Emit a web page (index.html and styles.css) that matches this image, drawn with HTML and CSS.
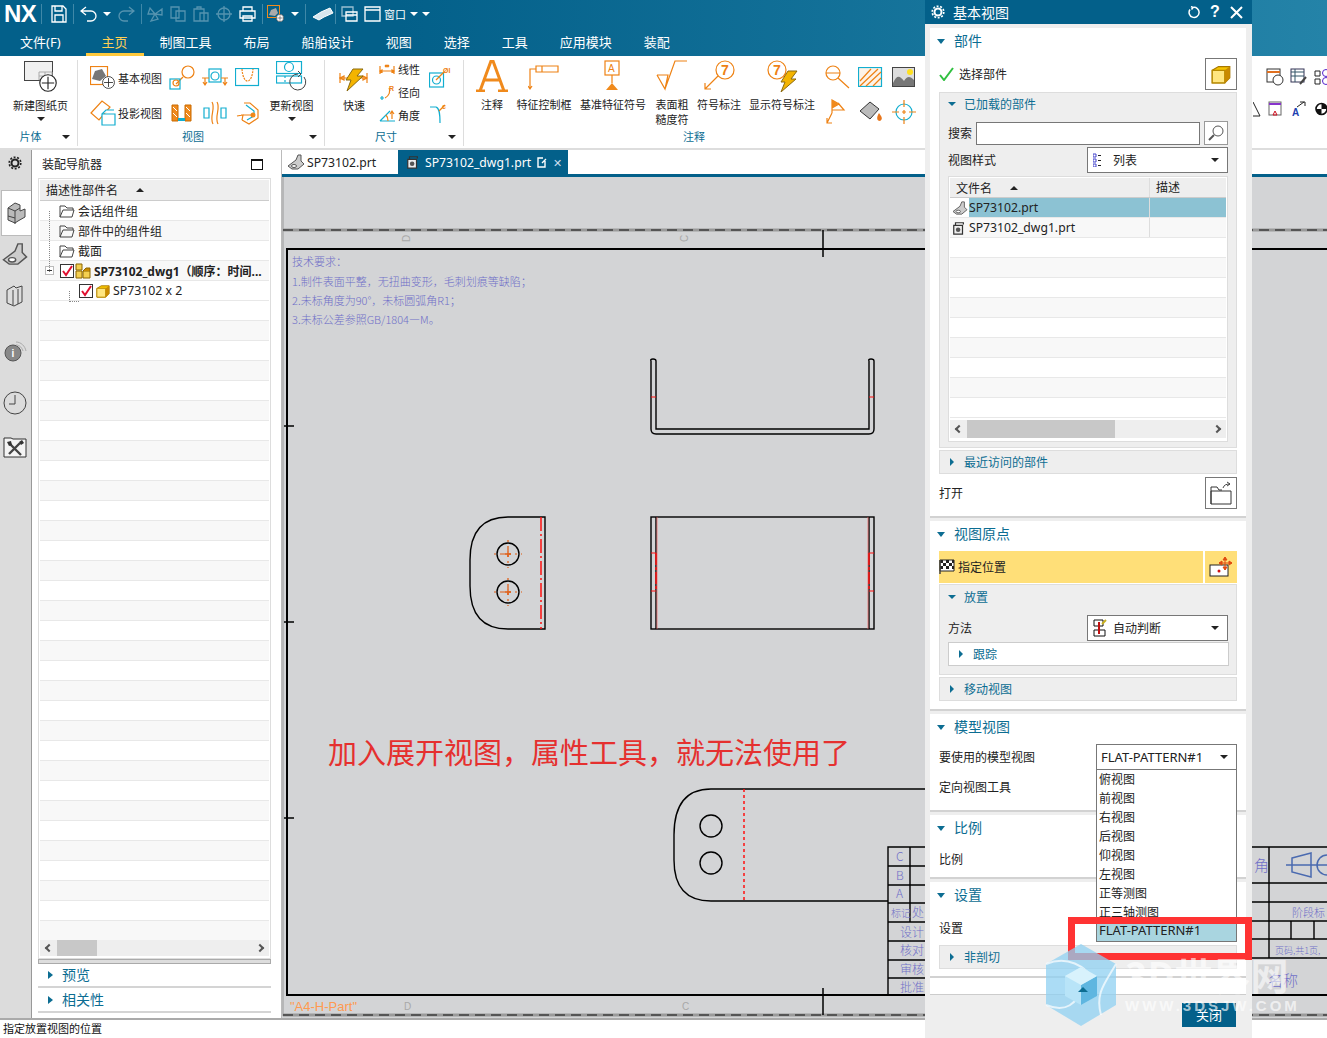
FILE: index.html
```html
<!DOCTYPE html>
<html lang="zh">
<head>
<meta charset="utf-8">
<title>NX 基本视图</title>
<link rel="stylesheet" href="styles.css">
</head>
<body>
<svg class="defs" aria-hidden="true">
  <symbol id="cube" viewBox="0 0 16 16"><path d="M1 5 6 2h9v9l-4 4H1z" fill="#f6c400" stroke="#a87800"/><path d="M1 5h10v10H1z" fill="#ffe680" stroke="#b88a00"/><path d="M11 5l4-3v9l-4 4z" fill="#c98a00"/></symbol>
  <symbol id="cubes" viewBox="0 0 16 16"><path d="M1 1h6v6H1zM1 8h6v7H1zM8 8h7v7H8z" fill="#f4cf50" stroke="#8a6400"/><path d="M8 8l3-3h4v3" fill="#c98a00" stroke="#8a6400"/></symbol>
  <symbol id="chk" viewBox="0 0 14 14"><rect x=".5" y=".5" width="13" height="13" fill="#fff" stroke="#333"/><path d="M3 7l3 4 6-9" fill="none" stroke="#e01030" stroke-width="2"/></symbol>
  <symbol id="folder" viewBox="0 0 16 14"><path d="M1 13V2h5l2 2h6v2M1 13l3-7h11l-2 7z" fill="none" stroke="#444"/></symbol>
  <symbol id="part" viewBox="0 0 18 16"><path d="M1 12 9 6l2-5 3 0 0 6 3 3-6 5H5z" fill="#ccc" stroke="#555"/><ellipse cx="7" cy="12" rx="2.5" ry="1.5" fill="#fff" stroke="#555"/></symbol>
  <symbol id="dwg" viewBox="0 0 16 16"><path d="M2 5h10v10H2z" fill="#eee" stroke="#333" stroke-width="1.4"/><circle cx="7" cy="10" r="2.6" fill="#555"/><path d="M4 5V2h9v2" fill="none" stroke="#333" stroke-width="1.4"/></symbol>
  <symbol id="plus" viewBox="0 0 16 16"><circle cx="8" cy="8" r="7.3" fill="#fff" stroke="#222"/><path d="M8 2.5v11M2.5 8h11" stroke="#222"/></symbol>
</svg>
<div class="app">
  <header class="top">
    <div class="qat">
      <span class="logo">NX</span><i class="qsep s1"></i>
      <svg width="16" height="18" viewBox="0 0 16 18"><path d="M1 1h11l3 3v13H1zM4 1v5h7V1M4 17v-7h8v7" class="w"/></svg><i class="qsep s2"></i>
      <svg width="18" height="16" viewBox="0 0 18 16"><path d="M6 1 1 5l5 4M1 5h10a5 5 0 0 1 0 10H7" class="w"/></svg>
      <b class="ar a1"></b>
      <svg class="dim" width="18" height="16" viewBox="0 0 18 16"><path d="M12 1l5 4-5 4M17 5H7a5 5 0 0 0 0 10h4" class="w"/></svg><i class="qsep s3"></i>
      <svg class="dim dg" width="16" height="16" viewBox="0 0 16 16"><path d="M8 8 3 2 1 8zM8 8l7-5v6zM8 8l-4 7 7-2z" class="w"/></svg>
      <svg class="dim dg" width="16" height="16" viewBox="0 0 16 16"><path d="M1 1h8v11H1zM6 5h9v10H6z" class="w"/></svg>
      <svg class="dim dg" width="16" height="16" viewBox="0 0 16 16"><path d="M1 3h10v12H1zM4 3V1h4v2M7 7h8v8H7z" class="w"/></svg>
      <svg class="dim dg" width="16" height="16" viewBox="0 0 16 16"><circle cx="8" cy="8" r="6" class="w"/><path d="M0 8h16M8 0v16" class="w"/></svg>
      <svg width="17" height="16" viewBox="0 0 17 16"><path d="M4 5V1h9v4M1 5h15v7H1zM4 10h9v5H4z" class="w"/></svg><i class="qsep s4"></i>
      <svg width="18" height="18" viewBox="0 0 18 18"><rect x=".5" y=".5" width="12" height="12" fill="none" stroke="#f08a1c"/><path d="M2 10 4 5l5-2 2 5-3 3z" fill="#aaa"/><use href="#plus" x="9" y="9" width="8" height="8"/></svg>
      <b class="ar a2"></b><i class="qsep s5"></i>
      <svg width="22" height="14" viewBox="0 0 22 14"><path d="M1 10 9 5l9-4 3 5-9 4-5 3z" fill="#d8e6ee" stroke="#fff"/></svg><i class="qsep s6"></i>
      <svg width="17" height="16" viewBox="0 0 17 16"><path d="M1 1h11v9H1z" class="w dimw"/><path d="M5 6h11v9H5zM5 9h11" class="w"/></svg>
      <svg class="win" width="17" height="16" viewBox="0 0 17 16"><path d="M1 1h15v14H1zM1 4h15" class="w"/></svg>
      <span class="wintxt">窗口</span><b class="ar a3"></b><b class="ar a3"></b>
    </div>
    <nav class="menu">
      <span class="first">文件(F)</span><span class="on">主页</span><span>制图工具</span><span>布局</span><span>船舶设计</span><span>视图</span><span>选择</span><span>工具</span><span>应用模块</span><span>装配</span>
    </nav>
  </header>

  <section class="ribbon">
    <div class="rg g1">
      <div class="rc">
        <div class="big w56">
          <svg class="ic" width="34" height="32" viewBox="0 0 34 32"><rect x=".5" y=".5" width="28" height="19" fill="#f0f0f0" stroke="#444"/><path d="M15 11h13v8H15zM15 15h13M21 11v8" fill="none" stroke="#aaa"/><use href="#plus" x="15" y="13" width="18" height="18"/></svg>
          <span>新建图纸页</span><b class="dk"></b>
        </div>
      </div>
      <footer>片体<b class="dk"></b></footer>
    </div>
    <div class="rg g2">
      <div class="rc">
        <div class="col1">
          <div class="line">
            <svg width="26" height="24" viewBox="0 0 26 24"><rect x=".5" y=".5" width="17" height="18" fill="none" class="o"/><path d="M2 13 5 5l7-2 4 7-6 5z" fill="#777"/><use href="#plus" x="12" y="10" width="13" height="13"/></svg><span>基本视图</span>
          </div>
          <div class="line">
            <svg width="26" height="26" viewBox="0 0 26 26"><path d="M1 13 12 1l8 6L9 20z" fill="none" class="o"/><path d="M12 14h13v11H12zM12 14l4-4h8" fill="#fff" class="c"/></svg><span>投影视图</span>
          </div>
        </div>
        <div class="igrid">
          <svg width="26" height="26" viewBox="0 0 26 26"><circle cx="19" cy="7" r="6" fill="none" class="o"/><path d="M7 19 14 12" class="o"/><rect x="1" y="14" width="10" height="10" fill="none" class="c"/><circle cx="7" cy="18" r="3" fill="none" class="o"/></svg>
          <svg width="26" height="22" viewBox="0 0 26 22"><rect x="7" y="2" width="12" height="13" fill="none" class="c"/><circle cx="13" cy="9" r="4" fill="none" class="c"/><path d="M3 11v7M1 15l2 3 2-3M23 11v7M21 15l2 3 2-3M0 11h7M19 11h7" class="o" fill="none"/></svg>
          <svg width="26" height="20" viewBox="0 0 26 20"><rect x=".5" y=".5" width="23" height="17" fill="none" class="c"/><path d="M7 1c1 16 10 16 11 0" fill="none" class="o" stroke-width="5" stroke-dasharray="2 1"/></svg>
          <svg width="22" height="18" viewBox="0 0 22 18"><path d="M1 1h6v16H1zM14 1h6v16h-6z" fill="#f08a1c" stroke="#c96a00"/><path d="M7 14h7v3H7z" fill="#12aed0"/><path d="M2 3l4 4M2 9l4 4M15 3l4 4M15 9l4 4" stroke="#fff"/></svg>
          <svg width="24" height="24" viewBox="0 0 24 24"><path d="M1 7h5v10H1zM18 7h5v10h-5z" fill="none" class="c"/><path d="M9 1c4 7-3 14 1 22M14 1c4 7-3 14 1 22" fill="none" class="o"/></svg>
          <svg width="24" height="24" viewBox="0 0 24 24"><path d="M8 2h6l8 7v8l-9 6-7-4" fill="none" class="o"/><path d="M10 4l8 6v5l-7 4" fill="none" class="c"/><circle cx="17" cy="14" r="2.5" fill="#f08a1c"/><path d="M1 15l6-1-1 5M17 14H5" fill="none" class="o"/></svg>
        </div>
        <div class="big upd">
          <svg class="ic" width="32" height="32" viewBox="0 0 32 32"><rect x=".5" y=".5" width="25" height="12" fill="none" class="c"/><circle cx="13" cy="6" r="4.5" fill="none" class="c"/><rect x=".5" y="15" width="25" height="7" fill="none" class="c"/><path d="M9 15v7" class="c" stroke-dasharray="2 2"/><path d="M28 16a8 8 0 1 1-6-3" fill="none" stroke="#444"/><path d="M22 10l3 3-3 3" fill="none" stroke="#444"/></svg>
          <span>更新视图</span><b class="dk"></b>
        </div>
      </div>
      <footer>视图<b class="dk"></b></footer>
    </div>
    <div class="rg g3">
      <div class="rc">
        <div class="big quick">
          <svg class="ic" width="30" height="28" viewBox="0 0 30 28"><path d="M0 12h28M1 7v10M28 7v10M1 12l4-2v4zM28 12l-4-2v4z" class="o" fill="none"/><path d="M14 3h10l-6 7h6L8 25l4-11H7z" fill="#f4b400" stroke="#8a6a10"/></svg>
          <span>快速</span>
        </div>
        <div class="dims">
          <div><svg width="16" height="12" viewBox="0 0 16 12"><path d="M1 3v8M15 3v8M1 8h14M6 2l2 2 2-2M6 4l2-2 2 2M1 8l2-1v2zM15 8l-2-1v2z" class="o" fill="none"/></svg><span>线性</span></div>
          <div><svg width="16" height="16" viewBox="0 0 16 16"><path d="M10 4c2 3 0 8-4 10" class="o" fill="none"/><path d="M1 14h4M3 12v4" class="c"/><text x="10" y="7" class="mo">R</text></svg><span>径向</span></div>
          <div><svg width="16" height="14" viewBox="0 0 16 14"><path d="M1 13 11 3M1 13h15" class="c" fill="none"/><path d="M9 13c0-3-1-5-2-6M11 6l2-3 2 3M13 3v8" class="o" fill="none"/></svg><span>角度</span></div>
        </div>
        <div class="dimic">
          <svg width="25" height="22" viewBox="0 0 25 22"><rect x=".5" y="7" width="14" height="14" fill="none" class="c"/><circle cx="7.500" cy="14" r="4" fill="none" class="c"/><path d="M7 14 15 6" fill="none" class="o"/><text x="14" y="7" class="mo">ØI</text></svg>
          <svg width="20" height="22" viewBox="0 0 20 22"><path d="M1 4h6c3 1 4 5 4 16" fill="none" class="c"/><path d="M10 8l6-6" fill="none" class="o"/><text x="13" y="6" class="mo">c</text></svg>
        </div>
      </div>
      <footer>尺寸<b class="dk"></b></footer>
    </div>
    <div class="rg g4">
      <div class="rc">
        <div class="big b1"><svg class="ic" width="34" height="32" viewBox="0 0 34 32"><path d="M1 31h9M23 31h10M5 31 16 1h2l11 30M9 20h16" fill="none" stroke="#f08a1c" stroke-width="3"/></svg><span>注释</span></div>
        <div class="big b2"><svg class="ic" width="32" height="32" viewBox="0 0 32 32"><path d="M8 6h22v6H8zM14 6v6M8 9H2v20M0 26l2 3 2-3" fill="none" class="o"/></svg><span>特征控制框</span></div>
        <div class="big b3"><svg class="ic" width="18" height="32" viewBox="0 0 18 32"><rect x="1" y="1" width="14" height="14" fill="none" class="o"/><text x="4" y="12" class="mini">A</text><path d="M8 15v8" class="o"/><path d="M2 30 8 23l6 7z" fill="#f08a1c"/></svg><span>基准特征符号</span></div>
        <div class="big b4"><svg class="ic" width="32" height="32" viewBox="0 0 32 32"><path d="M1 15h11L9 29 1 15M9 29 19 1h12" fill="none" class="o"/></svg><span>表面粗<br>糙度符</span></div>
        <div class="big b5"><svg class="ic" width="32" height="32" viewBox="0 0 32 32"><circle cx="22" cy="10" r="9" fill="none" class="o"/><text x="18" y="15" class="seven">7</text><path d="M15 16 2 29M2 23v6h6" fill="none" class="o"/></svg><span>符号标注</span></div>
        <div class="big b6"><svg class="ic" width="32" height="32" viewBox="0 0 32 32"><circle cx="11" cy="10" r="9" fill="none" class="o"/><text x="7" y="15" class="seven">7</text><path d="M22 11h9l-6 8h5L15 32l4-10h-4z" fill="#f4b400" stroke="#8a6a10"/></svg><span>显示符号标注</span></div>
        <div class="ig3">
          <svg width="25" height="24" viewBox="0 0 25 24"><circle cx="8" cy="8" r="7" fill="none" class="o"/><path d="M1 8h14M13 13l11 10" class="o"/></svg>
          <svg width="25" height="20" viewBox="0 0 25 20"><rect x=".5" y=".5" width="23" height="19" fill="#fdf3e8" class="c"/><path d="M2 14 13 2M2 19 20 2M8 19 23 5M15 19l8-8" class="o"/></svg>
          <svg width="23" height="20" viewBox="0 0 23 20"><rect x=".5" y=".5" width="22" height="19" fill="#ddd" stroke="#444"/><path d="M1 16c4-9 7-7 11-2 3-5 6-5 10-1v6H1z" fill="#777"/><circle cx="18" cy="5" r="3" fill="#ffe020"/></svg>
          <svg width="24" height="26" viewBox="0 0 24 26"><path d="M6 14V1l7 4-7 4M6 11h12L12 4M6 14 1 24M1 19v5h5" fill="none" class="o"/><path d="M6 1l7 4-7 4z" fill="#f08a1c"/></svg>
          <svg width="24" height="22" viewBox="0 0 24 22"><path d="M1 10 11 1l9 7-9 10z" fill="#bbb" stroke="#333"/><path d="M20 12c3 4 4 6 1 8-3 0-4-3-1-8z" fill="#e8761c"/></svg>
          <svg width="24" height="24" viewBox="0 0 24 24"><circle cx="12" cy="12" r="8" fill="none" class="c"/><path d="M12 0v7M12 17v7M0 12h7M17 12h7M10 12h4M12 10v4" class="o"/></svg>
        </div>
      </div>
      <footer class="f4">注释</footer>
    </div>
    <div class="rg g5">
      <div class="rc rt">
        <svg width="18" height="18" viewBox="0 0 18 18"><rect x="1" y="1" width="13" height="13" fill="#fff" stroke="#333"/><path d="M1 4h13" stroke="#e07020" stroke-width="2"/><circle cx="12" cy="12" r="5" fill="#fff" stroke="#333"/></svg>
        <svg width="18" height="18" viewBox="0 0 18 18"><rect x="1" y="1" width="13" height="13" fill="#fff" stroke="#335"/><path d="M1 4h13M5 1v13M1 8h13" stroke="#356"/><path d="M10 16l6-7" stroke="#444" stroke-width="2"/></svg>
        <svg width="16" height="18" viewBox="0 0 16 18"><path d="M1 3h5v5H1zM1 11h5v5H1z" fill="none" stroke="#222"/><circle cx="12" cy="5" r="3.500" fill="none" stroke="#52c"/><circle cx="12" cy="13" r="3.500" fill="none" stroke="#52c"/></svg>
        <svg width="8" height="16" viewBox="0 0 8 16"><path d="M0 1 7 15H0" fill="none" stroke="#222"/></svg>
        <svg width="14" height="16" viewBox="0 0 14 16"><rect x="1" y="1" width="12" height="13" fill="#fff" stroke="#666"/><path d="M1 3h12" stroke="#83c" stroke-width="2"/><path d="M5 14l2-4 2 4z" fill="none" stroke="#d01020"/></svg>
        <svg width="14" height="16" viewBox="0 0 14 16"><path d="M5 6l7-5M8 1h5v4" fill="none" stroke="#222"/><text x="0" y="15" class="minib">A</text></svg>
        <svg width="13" height="14" viewBox="0 0 13 14"><circle cx="6.500" cy="7" r="5.500" fill="#fff" stroke="#111" stroke-width="1.600"/><path d="M6.500 7V1.500A5.500 5.500 0 0 1 12 7zM6.500 7v5.500A5.500 5.500 0 0 1 1 7z" fill="#111"/></svg>
      </div>
    </div>
  </section>

  <main class="main">
    <aside class="strip">
      <svg class="st gear" width="14" height="14" viewBox="0 0 14 14"><circle cx="7" cy="7" r="3.500" fill="none" stroke="#222" stroke-width="2"/><circle cx="7" cy="7" r="5.800" fill="none" stroke="#222" stroke-width="1.600" stroke-dasharray="2 1.600"/></svg>
      <div class="sttab"><svg width="20" height="26" viewBox="0 0 20 26"><path d="M1 8 8 3l5 2v6l5-2v8l-7 4-3 2-7-3z" fill="#bbb" stroke="#444"/><path d="M1 8l7 3 5-3M8 11v13M1 16l7 2" fill="none" stroke="#444"/></svg></div>
      <svg class="st s2p" width="26" height="24" viewBox="0 0 18 16"><use href="#part"/></svg>
      <svg class="st s3p" width="18" height="24" viewBox="0 0 18 24"><path d="M1 6 8 2l2 2 6-2v16l-8 4-7-3zM7 6v15M12 5v15" fill="#ddd" stroke="#444"/></svg>
      <svg class="st s4p" width="24" height="24" viewBox="0 0 24 24"><circle cx="10" cy="14" r="8" fill="#888" stroke="#555"/><text x="8.500" y="18" class="info">i</text><path d="M13 3c5 0 9 4 10 9M13 6c4 0 6 3 7 6" fill="none" stroke="#aaa"/></svg>
      <svg class="st s5p" width="24" height="24" viewBox="0 0 24 24"><circle cx="12" cy="12" r="11" fill="none" stroke="#444"/><path d="M12 4v9H6" fill="none" stroke="#444"/></svg>
      <svg class="st s6p" width="24" height="24" viewBox="0 0 24 24"><path d="M1 4h7l2 1h13v18H1z" fill="#f4f4f4" stroke="#333"/><path d="M7 10l11 11M17 9 6 20" stroke="#444" stroke-width="2.400"/><path d="M4 8l4-1 1 4-3 1zM16 8l3-2 2 3-3 2z" fill="#333"/></svg>
    </aside>

    <section class="nav">
      <div class="navhead"><span>装配导航器</span><i class="winbtn"></i></div>
      <div class="treebox">
        <div class="thead"><span>描述性部件名</span><b class="up"></b></div>
        <div class="rows">
          <i class="dots d1"></i><i class="dots d2"></i>
          <div class="tr l1 alt0"><svg width="16" height="14"><use href="#folder"/></svg><span>会话组件组</span></div>
          <div class="tr l1 alt1"><svg width="16" height="14"><use href="#folder"/></svg><span>部件中的组件组</span></div>
          <div class="tr l1 alt0"><svg width="16" height="14"><use href="#folder"/></svg><span>截面</span></div>
          <div class="tr l0 alt1"><i class="minus"></i><svg width="14" height="14"><use href="#chk"/></svg><svg width="16" height="16"><use href="#cubes"/></svg><strong>SP73102_dwg1（顺序：时间...</strong></div>
          <div class="tr l2 alt0"><svg width="14" height="14"><use href="#chk"/></svg><svg width="14" height="14"><use href="#cube"/></svg><span class="lat">SP73102 x 2</span></div>
          <div class="empty"></div>
        </div>
        <div class="hscroll"><i class="sl"></i><i class="thumb t1"></i><i class="sr"></i></div>
      </div>
      <div class="navbar"></div>
      <div class="fold"><b class="tri"></b>预览</div>
      <div class="fold"><b class="tri"></b>相关性</div>
    </section>

    <section class="work">
      <div class="tabs">
        <div class="tab"><svg width="18" height="16"><use href="#part"/></svg><span>SP73102.prt</span></div>
        <div class="tab act"><svg width="14" height="14"><use href="#dwg"/></svg><span>SP73102_dwg1.prt</span><svg class="pin" width="10" height="11" viewBox="0 0 10 11"><path d="M8 4v6H1V1h5M5 6l4-4" fill="none" stroke="#fff" stroke-width="1.400"/></svg><span class="x">✕</span></div>
      </div>
      <svg class="sheet" width="1045" height="842" viewBox="282 177 1045 842">
        <rect x="282" y="177" width="1045" height="842" fill="#d3d4d6"/>
        <path d="M283 177v839" stroke="#999"/>
        <path d="M283 230H1327" stroke="#9a9a9a" stroke-width="3"/><path d="M283 230H1327" stroke="#111" stroke-dasharray="10 6"/>
        <path d="M283 1015H1327" stroke="#9a9a9a" stroke-width="3"/><path d="M283 1015H1327" stroke="#111" stroke-dasharray="10 6"/>
        <rect x="287" y="249" width="1100" height="746" fill="none" stroke="#000" stroke-width="2"/>
        <path d="M823 230v27M823 988v27M284 426h10M284 622h10M284 818h10M1252 995h75" stroke="#000" stroke-width="1.500"/>
        <text x="-242" y="410" class="zone" transform="rotate(-90)">D</text><text x="-242" y="688" class="zone" transform="rotate(-90)">C</text>
        <text x="404" y="1010" class="zone">D</text><text x="682" y="1010" class="zone">C</text>
        <text x="290" y="1011" class="sheetname">"A4-H-Part"</text>
        <g class="req">
          <text x="292" y="266">技术要求：</text>
          <text x="292" y="286">1.制件表面平整，无扭曲变形，毛刺划痕等缺陷；</text>
          <text x="292" y="305">2.未标角度为90°，未标圆弧角R1；</text>
          <text x="292" y="324">3.未标公差参照GB/1804—M。</text>
        </g>
        <g class="ln">
          <path d="M651 361V429Q651 434 656 434H869Q874 434 874 429V361Q874 359 871 359T869 361V429H656V361Q656 359 653 359T651 361Z"/>
          <rect x="651" y="517" width="223" height="112"/>
          <path d="M656 517V629M869 517V629"/>
          <path d="M545 517H508Q470 517 470 560V586Q470 629 508 629H545Z"/>
          <circle cx="508" cy="554" r="11"/><circle cx="508" cy="592" r="11"/>
          <path d="M711 901Q674 901 674 860V835Q674 789 711 789H925M711 901H888"/>
          <circle cx="711" cy="826" r="11"/><circle cx="711" cy="863" r="11"/>
          <path d="M888 995V847H925M888 866H925M888 885H925M888 903H925M888 922H925M888 941H925M888 960H925M888 978H925M910 847V922"/>
          <path d="M1252 847H1327M1252 883H1327M1252 902H1327M1252 921H1327M1252 939H1327M1252 958H1327M1269 847V958M1291 921V939M1314 921V939"/>
        </g>
        <path d="M651 397h5M869 397h5M651 553h5M651 591h5M869 553h5M869 591h5" stroke="#ff1010"/>
        <path d="M657 517V629M868 517V629" stroke="#f06060" stroke-width=".7"/>
        <path d="M656 553V591M869 553V591" stroke="#ff1010" stroke-width="1.500" stroke-dasharray="12 2 3 2"/>
        <path d="M541 517V629" stroke="#ff1010" stroke-width="1.500" stroke-dasharray="14 3 2 3"/>
        <path d="M744 789V901" stroke="#ff1010" stroke-width="1.500" stroke-dasharray="3 3"/>
        <path d="M494 554h28M508 540v28M494 592h28M508 578v28" stroke="#e05a10" stroke-width="1.200" stroke-dasharray="2 4 5 4 2 4"/>
        <path d="M505 554h6M508 551v6M505 592h6M508 589v6" stroke="#e05a10" stroke-width="1.300"/>
        <g class="tb">
          <text x="896" y="861">C</text><text x="896" y="880">B</text><text x="896" y="898">A</text>
          <text x="891" y="917" class="tbn">标记</text><text x="912" y="917">处</text>
          <text x="900" y="937">设计</text><text x="900" y="955">核对</text><text x="900" y="974">审核</text><text x="900" y="992">批准</text>
          <text x="1254" y="871" class="tbl">角</text>
          <text x="1292" y="917" class="tbm">阶段标</text>
          <text x="1275" y="954" class="tbs">页码,共1页,</text>
          <text x="1268" y="986" class="tbl">名称</text>
        </g>
        <path d="M1286 865h41M1292 858l19-5v24l-19-5zM1327 855a10 10 0 0 0 0 20" fill="none" stroke="#4a6ab0" stroke-width="1.500"/>
        <text x="328" y="764" class="note">加入展开视图，属性工具，就无法使用了</text>
      </svg>
    </section>
  </main>

  <footer class="status">指定放置视图的位置</footer>

  <aside class="dialog">
    <div class="dtitle">
      <svg width="14" height="14" viewBox="0 0 14 14"><circle cx="7" cy="7" r="3.500" fill="none" stroke="#fff" stroke-width="2"/><circle cx="7" cy="7" r="5.800" fill="none" stroke="#fff" stroke-width="1.600" stroke-dasharray="2 1.600"/></svg>
      <span class="dt">基本视图</span>
      <svg class="reset" width="13" height="13" viewBox="0 0 13 13"><path d="M5 1.500a5 5 0 1 1-3 2M5 1.500l-2-1M5 1.500l-1.500 2" fill="none" stroke="#fff" stroke-width="1.500"/></svg>
      <span class="qm">?</span><svg class="cl" width="13" height="13" viewBox="0 0 13 13"><path d="M1 1l11 11M12 1 1 12" stroke="#fff" stroke-width="2"/></svg>
    </div>
    <div class="dbody">
      <section class="sec s-a">
        <h3><b class="dn"></b>部件</h3>
        <div class="row r-sel">
          <svg width="16" height="14" viewBox="0 0 16 14"><path d="M1 8l4 5 9-12" fill="none" stroke="#30c040" stroke-width="2"/></svg><span class="lb">选择部件</span>
          <div class="sq"><svg width="20" height="20"><use href="#cube"/></svg></div>
        </div>
        <div class="grp g-loaded">
          <h4><b class="dn sm"></b>已加载的部件</h4>
          <div class="row r-search"><span class="lb">搜索</span><div class="inp"></div><div class="sq2"><svg width="18" height="18" viewBox="0 0 18 18"><circle cx="11" cy="7" r="5" fill="#fff" stroke="#555"/><path d="M7 11l-5 5" stroke="#555" stroke-width="2"/></svg></div></div>
          <div class="row r-style"><span class="lb">视图样式</span>
            <div class="sel wide"><svg width="8" height="14" viewBox="0 0 8 14"><path d="M0 1h3v3H0zM0 6h3v3H0zM0 11h3v3H0z" fill="none" stroke="#44c"/><path d="M5 2.500h3M5 7.500h3M5 12.500h3" stroke="#222"/></svg><span class="seltxt">列表</span><b class="dk"></b></div>
          </div>
          <div class="tbl">
            <div class="th"><span class="c-a">文件名<b class="up"></b></span><span class="c-b">描述</span></div>
            <div class="tbody">
              <div class="trw"><span class="c-a sel-row"><svg class="fi" width="16" height="14"><use href="#part"/></svg><em>SP73102.prt</em></span><span class="c-b sel-row2"></span></div>
              <div class="trw alt"><span class="c-a"><svg class="fi" width="14" height="14"><use href="#dwg"/></svg><em class="m3">SP73102_dwg1.prt</em></span><span class="c-b"></span></div>
              <div class="tfill"></div>
            </div>
            <div class="hscroll h2"><i class="sl"></i><i class="thumb t2"></i><i class="sr"></i></div>
          </div>
        </div>
        <div class="grp fold2"><b class="rt-tri"></b>最近访问的部件</div>
        <div class="row r-open"><span class="lb">打开</span>
          <div class="sq"><svg width="24" height="24" viewBox="0 0 24 24"><path d="M2 23V6h6l2 3h3M2 10h20v13H2z" fill="none" stroke="#333"/><path d="M14 7c1-3 3-4 7-4M18 1l3 2-3 2" fill="none" stroke="#444"/></svg></div>
        </div>
      </section>
      <section class="sec s-b">
        <h3><b class="dn"></b>视图原点</h3>
        <div class="row r-pos">
          <div class="yl"><svg width="16" height="16" viewBox="0 0 16 16"><path d="M1 1h14v11H1z" fill="#fff" stroke="#222"/><path d="M1 1h3v3H1zM7 1h3v3H7zM13 1h2v3h-2zM4 4h3v3H4zM10 4h3v3h-3zM1 7h3v3H1zM7 7h3v3H7zM13 7h2v3h-2z" fill="#222"/><path d="M1 1v14" stroke="#444" stroke-width="1.500"/></svg><span class="lb">指定位置</span></div>
          <div class="yb"><svg width="24" height="22" viewBox="0 0 24 22"><rect x="1" y="9" width="18" height="11" fill="#fff" stroke="#222"/><circle cx="10" cy="15" r="1.500" fill="#d01010"/><path d="M16 1v13M10 7h13M16 1l-2 3h4zM16 14l-2-3h4zM10 7l3-2v4zM23 7l-3-2v4z" fill="#e04a10" stroke="#e04a10"/></svg></div>
        </div>
        <div class="grp g-place">
          <h4><b class="dn sm"></b>放置</h4>
          <div class="row r-method"><span class="lb">方法</span>
            <div class="sel wide"><svg width="14" height="18" viewBox="0 0 14 18"><path d="M1 1h9v6H1zM1 11h11v6H1z" fill="#fff" stroke="#111"/><path d="M6 3v12" stroke="#c01010" stroke-width="2"/><path d="M9 5l4-4" stroke="#c8b020" stroke-width="2"/></svg><span class="seltxt">自动判断</span><b class="dk"></b></div>
          </div>
          <div class="trk"><b class="rt-tri"></b>跟踪</div>
        </div>
        <div class="grp fold2"><b class="rt-tri"></b>移动视图</div>
      </section>
      <section class="sec s-c">
        <h3><b class="dn"></b>模型视图</h3>
        <div class="row r-model"><span class="lb">要使用的模型视图</span>
          <div class="sel mv"><span class="flat">FLAT-PATTERN#1</span><b class="dk"></b></div>
        </div>
        <div class="row r-plain"><span class="lb">定向视图工具</span></div>
      </section>
      <section class="sec s-d">
        <h3><b class="dn"></b>比例</h3>
        <div class="row r-plain2"><span class="lb">比例</span></div>
      </section>
      <section class="sec s-e">
        <h3><b class="dn"></b>设置</h3>
        <div class="row r-plain3"><span class="lb">设置</span></div>
        <div class="grp fold2"><b class="rt-tri"></b>非剖切</div>
      </section>
      <div class="gapw"></div>
    </div>
    <div class="dfoot"><span class="close">关闭</span></div>
  </aside>

  <ul class="dropdown">
    <li>俯视图</li><li>前视图</li><li>右视图</li><li>后视图</li><li>仰视图</li><li>左视图</li><li>正等测图</li><li>正三轴测图</li>
    <li class="hit">FLAT-PATTERN#1</li>
  </ul>
  <div class="redbox"></div>
  <div class="wm">
    <svg width="72" height="84" viewBox="0 0 72 84"><path d="M36 1 71 21V62L36 83 1 62V21z" fill="#8fd0f2" opacity=".75"/><path d="M1 21c20-8 40 0 50 20M71 21C60 40 50 50 56 72M1 62c20 8 30 0 40-22" fill="none" stroke="#fff" stroke-width="2" opacity=".7"/><path d="M36 24 52 33V53L36 62 20 53V33z" fill="#b8e4f8"/><path d="M36 42 52 33V53L36 62z" fill="#5fb6e0"/><path d="M36 42 20 33 36 24 52 33z" fill="#d8f2fc"/><path d="M38 44l5 5H33z" fill="#0c6d92"/></svg>
    <div class="wmt"><span class="wm1">3D世界网</span><span class="wm2">WWW.3DSJW.COM</span></div>
  </div>
</div>
</body>
</html>
```
FILE: styles.css
```css
*{box-sizing:border-box}
html,body{margin:0;padding:0}
body{font-family:"Noto Sans","Noto Sans CJK SC",sans-serif;font-size:12px;color:#222;background:#fff}
.defs{position:absolute;width:0;height:0}
svg{display:block;flex:none}
.w{fill:none;stroke:#fff;stroke-width:1.3}
.dim{opacity:.32}
.dimw{opacity:.6}
.o{stroke:#ee8214;stroke-width:1.2}
.c{stroke:#12aed0;stroke-width:1.2}
.app{position:relative;width:1327px;height:1038px;overflow:hidden;display:flex;flex-direction:column}

/* top */
.top{height:56px;background:linear-gradient(90deg,#03608a 0,#03608a 30%,#2483a8 100%);color:#fff}
.qat{height:28px;display:flex;align-items:center;padding-left:4px}
.logo{font:bold 24px "Liberation Sans",sans-serif;width:33px;letter-spacing:-.5px}
.qsep{width:1px;height:20px;background:#3f88a8;display:block}
.s1{margin:0 9px 0 4px}.s2{margin:0 6px}.s3{margin:0 5px 0 6px}.s4{margin:0 4px 0 6px}.s5{margin:0 6px}.s6{margin:0 5px 0 1px}
.dg{margin-right:7px}
.ar{display:block;width:0;height:0;border:4px solid transparent;border-top-color:#fff;border-bottom:0}
.a1{margin:0 6px 0 5px}.a2{margin:0 0 0 6px}.a3{margin:0 0 0 4px}
.win{margin:0 3px 0 6px}
.wintxt{font-size:11px}
.menu{height:28px;display:flex;gap:32px;padding-left:20px;font-size:13px;align-items:center}
.menu span{line-height:28px;position:relative}
.menu .first{margin-right:9px}
.menu .on{color:#ffcf55}
.menu .on::after{content:"";position:absolute;left:-16px;right:-16px;bottom:0;height:3px;background:#ffc93c}

/* ribbon */
.ribbon{height:94px;flex:none;display:flex;background:#fff;border-bottom:2px solid #ddd;font-size:11px}
.rg{display:flex;flex-direction:column;flex:none;border-right:1px solid #ddd;margin:4px 0 0;height:86px}
.rc{flex:1;display:flex;min-height:0}
.rg footer{height:18px;line-height:18px;flex:none;text-align:center;color:#0c6d92;font-size:11px;position:relative;padding-right:16px}
.rg .f4{padding-right:326px}
.rg footer .dk{position:absolute;right:7px;top:7px;margin:0}
.dk{display:block;width:0;height:0;border:4px solid transparent;border-top-color:#222;border-bottom:0}
.g1{width:78px}.g2{width:247px}.g3{width:139px}.g4{width:786px;border:0}.g5{width:77px;border:0;overflow:hidden}
.big{display:flex;flex-direction:column;align-items:center;text-align:center;line-height:15px;white-space:nowrap;flex:none}
.big .ic{height:32px;margin-bottom:5px}
.big .dk{margin-top:4px}
.w56{width:78px;padding:1px 0 0 3px}
.col1{width:75px;margin-left:12px}
.line{display:flex;align-items:center;gap:2px;height:35px}
.igrid{display:grid;grid-template-columns:33px 33px 33px;grid-template-rows:35px 35px;justify-items:center;align-items:center}
.upd{width:55px;padding-top:1px}
.quick{width:56px;margin-left:1px;padding-top:6px}
.quick .ic{height:28px;margin-bottom:4px}
.dims{width:47px;margin:-3px 0 0 -3px}
.dims div{display:flex;align-items:center;gap:3px;height:23px}
.dimic{display:flex;flex-direction:column;gap:15px;padding:6px 0 0 3px}
.b1{width:56px}.b2{width:48px}.b3{width:90px}.b4{width:28px}.b5{width:66px}.b6{width:60px}
.mini{font:10px "Liberation Sans",sans-serif;fill:#ee8214}
.mo{font:bold 7px "Liberation Sans",sans-serif;fill:#ee8214}
.minib{font:bold 10px "Liberation Sans",sans-serif;fill:#2040b0}
.seven{font:bold 14px "Liberation Sans",sans-serif;fill:#ee8214}
.ig3{display:grid;grid-template-columns:33px 33px 33px;grid-template-rows:34px 36px;justify-items:center;align-items:center;margin-left:9px}
.rt{display:grid;grid-template-columns:13px 24px 23px 23px;grid-template-rows:34px 30px;justify-items:center;align-items:center}
.rt svg:first-child{grid-column:2}

/* main */
.main{flex:1;display:flex;min-height:0}
.strip{width:32px;flex:none;background:#dcdcdc;border-right:1px solid #999;display:flex;flex-direction:column;align-items:center}
.st{margin-left:-1px}
.gear{margin-top:6px}
.sttab{width:30px;height:46px;margin:20px 0 0 1px;background:#fff;border:1px solid #bbb;border-right:0;display:flex;align-items:center;justify-content:center}
.s2p{margin-top:6px}.s3p{margin-top:18px}.s4p{margin-top:31px}.s5p{margin-top:28px}.s6p{margin-top:19px}

.nav{width:250px;flex:none;border-right:1px solid #bbb;padding:0 10px 0 6px;background:#fff;display:flex;flex-direction:column}
.navhead{height:28px;flex:none;display:flex;align-items:center;justify-content:space-between;padding:0 8px 0 4px}
.winbtn{display:block;width:12px;height:11px;border:1px solid #111;border-top-width:2px}
.treebox{height:781px;flex:none;border:1px solid #ddd;padding:1px;display:flex;flex-direction:column}
.thead{height:21px;background:#eee;border-bottom:1px solid #ccc;padding-left:6px;display:flex;align-items:center;gap:18px;flex:none}
.up{display:block;width:0;height:0;border:4.5px solid transparent;border-bottom-color:#222;border-top:0}
.rows{position:relative;flex:1;min-height:0;display:flex;flex-direction:column}
.tr{height:20px;flex:none;display:flex;align-items:center;border-bottom:1px solid #e8e8e8;white-space:nowrap}
.alt0{background:#fff}.alt1{background:#f8f8f8}
.l1{padding-left:19px;gap:3px}
.l0{padding-left:5px}
.l0 svg:first-of-type{margin-left:6px}
.l0 svg+svg{margin:0 3px 0 1px}
.l2{padding-left:39px;gap:3px}
.minus{display:block;width:9px;height:9px;border:1px solid #bbb;background:linear-gradient(#333,#333) center/5px 1px no-repeat #fff}
strong{font-size:12px}
.lat{font-size:12.300px}
.dots{position:absolute;display:block}
.d1{left:9px;top:10px;width:1px;height:61px;border-left:1px dotted #888}
.d2{left:29px;top:90px;width:10px;height:11px;border-left:1px dotted #888;border-bottom:1px dotted #888}
.empty{flex:1;background:repeating-linear-gradient(#fff 0 19px,#e8e8e8 19px 20px,#f8f8f8 20px 39px,#e8e8e8 39px 40px)}
.hscroll{height:16px;background:#eee;flex:none;position:relative;display:flex;align-items:center;margin-bottom:1px}
.sl,.sr{display:block;width:6px;height:6px;border:solid #555;border-width:2px 0 0 2px;transform:rotate(-45deg);position:absolute;left:6px;top:5px}
.sr{left:auto;right:6px;transform:rotate(135deg)}
.thumb{display:block;height:16px;background:#c8c8c8}
.t1{width:40px;margin-left:17px}
.navbar{height:5px;background:#ddd;border:1px solid #aaa;flex:none}
.fold{height:24px;flex:none;border-bottom:2px solid #d4d4d4;color:#0c6d92;font-size:14px;display:flex;align-items:center;padding-left:10px;line-height:22px}
.fold+.fold{height:25px}
.fold .tri{display:block;width:0;height:0;border:4px solid transparent;border-left:5px solid #0c6d92;border-right:0;margin-right:9px}

.work{flex:1;min-width:0;display:flex;flex-direction:column;background:#d3d4d6}
.tabs{height:27px;flex:none;background:#fff;border-bottom:3px solid #03608a;display:flex}
.tab{display:flex;align-items:center;width:116px;padding-left:5px;gap:2px;height:24px;font-size:12.200px}
.act{width:170px;background:#03608a;color:#fff;padding-left:8px;gap:5px}
.pin{margin-left:1px}
.x{font-size:11px;color:#cde;margin-left:1px}
.sheet{flex:none}
.ln{fill:none;stroke:#000;stroke-width:1.400}
.zone{font:10px "Liberation Sans",sans-serif;fill:#a8a8a8}
.sheetname{font:13px "Liberation Sans",sans-serif;fill:#ff9a50}
.req text{font:11px "Noto Sans CJK SC",sans-serif;font-weight:300;fill:#7070c8}
.tb text{font:12px "Noto Sans CJK SC",sans-serif;font-weight:300;fill:#7070c8}
.tb .tbl{font-size:15px}
.tb .tbn{font-size:10px}
.tb .tbm{font-size:11px}
.tb .tbs{font-size:9px}
.note{font:29px "Noto Sans CJK SC",sans-serif;fill:#e5302f}
.info{font:bold 10px "Liberation Sans",sans-serif;fill:#fff}

.status{height:20px;flex:none;border-top:2px solid #aaa;padding-left:3px;font-size:11px;line-height:17px;background:#fff;color:#111}

/* dialog */
.dialog{position:absolute;left:925px;top:0;width:327px;height:1038px;background:#eee;display:flex;flex-direction:column}
.dtitle{height:24px;background:#03608a;color:#fff;display:flex;align-items:center;padding-left:6px;font-size:14px;flex:none}
.dt{margin-left:8px;width:235px}
.reset{margin-right:9px}
.qm{font:bold 16px "Liberation Sans",sans-serif;margin-right:11px;width:9px}
.dbody{margin:4px 6px 0 5px;flex:none}
.sec{background:#fff;padding:0 9px;border-bottom:2px solid #d2d2d2;margin-bottom:3px}
h3{margin:0;height:26px;display:flex;align-items:center;font-weight:400;font-size:14px;color:#0c6d92;line-height:26px}
h4{margin:0;height:24px;display:flex;align-items:center;font-weight:400;font-size:12px;color:#0c6d92;padding-left:8px}
.dn{display:block;width:0;height:0;border:4.5px solid transparent;border-top:5px solid #0c6d92;border-bottom:0;margin:0 9px 0 -2px}
.dn.sm{border-width:4px;border-top-width:4px;border-bottom:0;margin:0 8px 0 0}
.row{display:flex;align-items:center}
.lb{font-size:12px;color:#222}
.sq{width:32px;height:32px;border:1px solid #777;background:#fff;margin-left:auto;display:flex;align-items:center;justify-content:center}
.r-sel{height:32px;margin-top:4px}
.r-sel .lb{margin-left:4px}
.grp{background:#eee;border:1px solid #ddd}
.g-loaded{height:356px;margin-top:2px}
.g-loaded h4{height:22px}
.r-search{height:24px;padding:0 8px;margin-top:6px}
.inp{width:224px;height:23px;margin-left:4px;background:#fff;border:1px solid #777}
.sq2{width:24px;height:24px;margin-left:4px;background:#fff;border:1px solid #999;display:flex;align-items:center;justify-content:center}
.r-style{height:26px;padding:0 8px;margin-top:2px;justify-content:space-between}
.sel{height:26px;background:#fff;border:1px solid #777;display:flex;align-items:center;padding:0 8px 0 5px}
.sel .dk{margin-left:auto}
.wide{width:141px}
.seltxt{margin-left:12px}
.r-method .seltxt{margin-left:6px}
.tbl{margin:3px 8px 0;width:280px;height:266px;border:1px solid #ddd;background:#fff;padding:1px}
.th{display:flex;height:20px;background:#eee;border-bottom:1px solid #ccc}
.c-a{width:200px;display:flex;align-items:center;border-right:1px solid #ddd;height:100%;padding-left:6px;gap:18px}
.c-b{flex:1;padding-left:6px;line-height:19px;height:100%}
.tbody{height:220px;display:flex;flex-direction:column}
.trw{height:20px;flex:none;display:flex;border-bottom:1px solid #e8e8e8}
.trw .c-a{padding:0;gap:0}
.fi{margin:0 1px 0 2px}
.trw em{font-style:normal;font-size:12.200px;line-height:19px;height:100%;flex:1}
.sel-row em{background:#8cc2d3}
.sel-row2{background:#8cc2d3}
.alt{background:#f8f8f8}
.m3{margin-left:2px}
.tfill{flex:1;background:repeating-linear-gradient(#fff 0 19px,#e8e8e8 19px 20px,#f8f8f8 20px 39px,#e8e8e8 39px 40px)}
.h2{height:18px;margin-top:2px}
.h2 .sl,.h2 .sr{top:6px}
.h2 .thumb{height:18px}
.t2{width:148px;margin-left:17px}
.fold2{height:24px;margin-top:2px;display:flex;align-items:center;color:#0c6d92;padding-left:10px;font-size:12px}
.rt-tri{display:block;width:0;height:0;border:4px solid transparent;border-left:4px solid #0c6d92;border-right:0;margin-right:10px}
.r-open{height:32px;margin:3px 0 7px}
.s-a{height:490px}
.s-b{height:190px}
.r-pos{height:32px;margin-top:4px;gap:2px}
.yl{flex:1;height:32px;background:#ffdf78;display:flex;align-items:center;gap:3px}
.yb{width:32px;height:32px;background:#ffdf78;display:flex;align-items:center;justify-content:center}
.g-place{height:91px;margin-top:1px}
.r-method{height:26px;padding:0 8px;margin-top:6px;justify-content:space-between}
.trk{height:24px;margin:1px 8px 0;width:281px;background:#fff;border:1px solid #ccc;color:#0c6d92;display:flex;align-items:center;padding-left:10px}
.s-c{height:98px}
.r-model{height:26px;margin-top:4px;justify-content:space-between}
.mv{width:141px;padding-left:4px}
.flat{font-size:13px}
.r-plain{height:30px;margin-top:2px}
.s-d{height:64px}
.r-plain2{height:32px;margin-top:2px}
.s-e{height:96px}
.r-plain3{height:32px;margin-top:4px}
.s-e .fold2{margin-top:1px}
.gapw{height:17px;background:#fff;border-bottom:1px solid #ccc;margin-top:-3px}
.dfoot{flex:1;display:flex;justify-content:flex-end;padding:8px 16px 0 0}
.close{display:block;width:54px;height:24px;background:#03608a;color:#fff;text-align:center;line-height:24px;font-size:13px}

.dropdown{position:absolute;left:1096px;top:769px;width:141px;height:173px;margin:0;padding:0 0 0 2px;list-style:none;background:#fff;border:1px solid #777;font-size:12px;line-height:19px;overflow:hidden}
.hit{position:absolute;left:0;right:0;bottom:0;height:20px;padding-left:2px;background:#a9d5e0;color:#222;font-size:13px}
.redbox{position:absolute;left:1068px;top:917px;width:184px;height:43px;border:7px solid #ff3333}
.wm{position:absolute;left:1045px;top:943px;display:flex;gap:8px;pointer-events:none}
.wmt{display:flex;flex-direction:column;padding-top:8px}
.wm1{font:bold 38px/46px "Noto Sans CJK SC",sans-serif;color:rgba(255,255,255,.6)}
.wm2{font:bold 15px/18px "Liberation Sans",sans-serif;letter-spacing:3px;color:rgba(255,255,255,.65);white-space:nowrap}
```
